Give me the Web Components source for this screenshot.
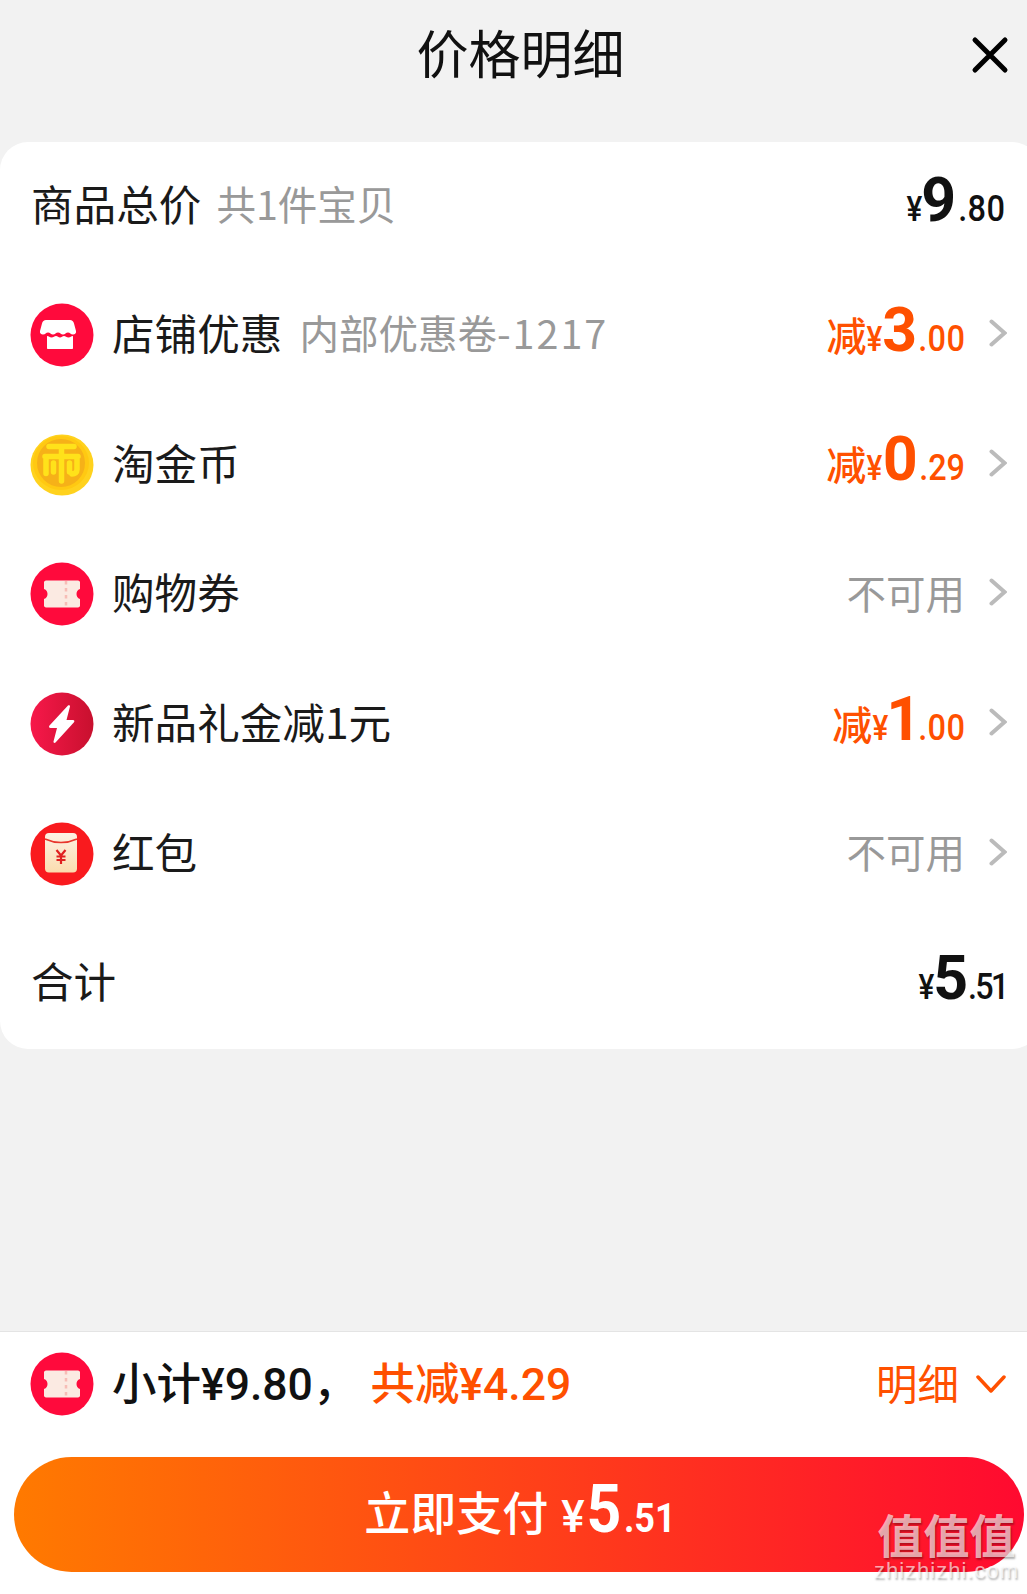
<!DOCTYPE html>
<html lang="zh">
<head>
<meta charset="utf-8">
<title>价格明细</title>
<style>
  html, body { margin: 0; padding: 0; }
  body {
    width: 1027px;
    height: 1594px;
    background: #f2f2f2;
    font-family: "Noto Sans CJK SC", "Noto Sans", sans-serif;
    color: #111;
    overflow: hidden;
  }
</style>
</head>
<body>
<price-sheet>
  <sheet-header slot="header" title-text="价格明细"></sheet-header>
  <price-row slot="rows" height="128.500" lift="14" note-gap="15" label="商品总价" note="共1件宝贝" kind="total" yen="¥" big="9" small=".80"></price-row>
  <price-row slot="rows" icon="shop" label="店铺优惠" note="内部优惠卷" note-tail="-1217" kind="off" yen="¥" big="3" small=".00" arrow></price-row>
  <price-row slot="rows" icon="coin" label="淘金币" kind="off" yen="¥" big="0" small=".29" arrow></price-row>
  <price-row slot="rows" icon="ticket" label="购物券" kind="none" arrow></price-row>
  <price-row slot="rows" icon="bolt" label="新品礼金减1元" kind="off" yen="¥" big="1" small=".00" arrow></price-row>
  <price-row slot="rows" icon="packet" label="红包" kind="none" arrow></price-row>
  <price-row slot="rows" height="130.500" pad-bottom="1" lift="12" small-tight label="合计" kind="total" yen="¥" big="5" small=".51"></price-row>
  <sheet-footer slot="footer"></sheet-footer>
</price-sheet>

<script>
const ICONS = {
  shop: `<svg viewBox="0 0 64 64"><circle cx="32" cy="32" r="31.500" fill="#ff0a3c"/>
    <g transform="translate(-2 0)" fill="#fff">
      <path d="M22 17h20c2 0 3.500 1.500 4 3.500l2 7.500c.5 2-1 3.500-3 3.500-2.500 0-3-2-5-2s-3 2-5 2-3-2-5-2-3 2-5 2-3-2-5-2-2.500 2-5 2c-2 0-3.500-1.500-3-3.500l2-7.500c.5-2 2-3.500 4-3.500z"/>
      <path d="M19 33c2 0 2.500 1.500 4.500 1.500s3-1.500 4.500-1.500 2.500 1.500 4 1.500 2.500-1.500 4-1.500 2.500 1.500 4.500 1.500 2.500-1.500 4.500-1.500v12c0 .6-.4 1-1 1h-24c-.6 0-1-.4-1-1z"/>
    </g></svg>`,
  coin: `<svg viewBox="0 0 64 64"><ellipse cx="32" cy="32" rx="31.500" ry="30.500" fill="#ffd21e"/>
    <ellipse cx="31" cy="30" rx="28" ry="27" fill="#ffc912"/>
    <circle cx="31" cy="30" r="24" fill="#f6b118"/>
    <path d="M19 13.500h25M15 23.500h33M16 23.500v17M47 23.500v13c0 3-2 4.500-5 4.500M31.500 14v34M23.500 30v9M39.500 30v9" fill="none" stroke="#ffe21a" stroke-width="5.500" stroke-linecap="round"/></svg>`,
  ticket: `<svg viewBox="0 0 64 64"><circle cx="32" cy="32" r="31.500" fill="#ff0a3c"/>
    <path d="M16 18.500h32c1 0 2 .9 2 2v6.500c-2.500.8-3.500 2.800-3.500 5s1 4.200 3.500 5v6.500c0 1.100-1 2-2 2h-32c-1 0-2-.9-2-2v-6.500c2.500-.8 3.500-2.800 3.500-5s-1-4.200-3.500-5v-6.500c0-1.100 1-2 2-2z" fill="#fbeae2"/>
    <path d="M36 19v26" stroke="#f7bdb6" stroke-width="2.500" stroke-dasharray="3.500 3.500"/></svg>`,
  bolt: `<svg viewBox="0 0 64 64"><defs><linearGradient id="b" x1="0" x2="1" y1="0" y2="0"><stop offset="0" stop-color="#f7184a"/><stop offset="1" stop-color="#c8102e"/></linearGradient></defs>
    <circle cx="32" cy="32" r="31.500" fill="url(#b)"/>
    <path d="M38 13.500c.8-.8 2.200-.2 2 1L36.500 28h6.500c1.300 0 1.800 1.300 1 2.200L25.500 50.500c-.9.900-2.300.2-2-1l3.500-13.500H20.500c-1.300 0-2-1.500-1-2.500z" fill="#fff"/></svg>`,
  packet: `<svg viewBox="0 0 64 64"><defs><linearGradient id="p" x1="0" x2="0" y1="0" y2="1"><stop offset="0" stop-color="#fdf1e4"/><stop offset="1" stop-color="#fbdcae"/></linearGradient></defs>
    <circle cx="32" cy="32" r="31.500" fill="#f91a1e"/>
    <rect x="15" y="11" width="32" height="39.500" rx="4" fill="url(#p)"/>
    <path d="M15 17c10 4.500 22 4.500 32 0" fill="none" stroke="#e8362c" stroke-width="1.500"/>
    <path d="M26.500 28l4.500 5.500 4.500-5.500M31 33.500v8.500M26.500 34.500h9M26.500 38h9" fill="none" stroke="#e02020" stroke-width="2.200"/></svg>`
};

class PriceSheet extends HTMLElement {
  connectedCallback() {
    this.attachShadow({ mode: 'open' });
    this.shadowRoot.innerHTML = `
      <style>
        :host { display: flex; flex-direction: column; width: 1027px; height: 1594px; }
        .card {
          display: flex;
          flex-direction: column;
          height: 907px;
          margin-right: -13px;
          background: #fff;
          border-radius: 28px;
        }
        .spacer { flex: 1; }
      </style>
      <slot name="header"></slot>
      <div class="card"><slot name="rows"></slot></div>
      <div class="spacer"></div>
      <slot name="footer"></slot>
    `;
  }
}

class SheetHeader extends HTMLElement {
  connectedCallback() {
    this.attachShadow({ mode: 'open' });
    this.shadowRoot.innerHTML = `
      <style>
        :host { display: block; position: relative; height: 142px; }
        .title {
          padding: 16px 0 0 14px;
          text-align: center;
          font-size: 52px;
          line-height: 72px;
          color: #111;
        }
        svg { position: absolute; left: 971px; top: 36px; width: 38px; height: 38px; }
      </style>
      <div class="title">${this.getAttribute('title-text')}</div>
      <svg viewBox="0 0 38 38"><path d="M4 4l30 30M34 4L4 34" stroke="#000" stroke-width="5" stroke-linecap="round"/></svg>
    `;
  }
}

class PriceRow extends HTMLElement {
  connectedCallback() {
    const a = name => this.getAttribute(name);
    const kind = a('kind');
    const hasArrow = this.hasAttribute('arrow');
    let value = '';
    if (kind === 'none') {
      value = `<span class="none">不可用</span>`;
    } else {
      value = `<span class="amount ${kind}">${kind === 'off' ? '<span class="jian">减</span>' : ''}<span class="yen">${a('yen')}</span><span class="big">${a('big')}</span><span class="small">${a('small')}</span></span>`;
    }
    this.attachShadow({ mode: 'open' });
    this.shadowRoot.innerHTML = `
      <style>
        :host {
          display: flex;
          align-items: center;
          height: ${a('height') || 129.6}px;
          box-sizing: border-box;
          padding: 0 ${hasArrow ? 33 : 35}px ${a('pad-bottom') || 0}px 31px;
          font-size: 42.600px;
          color: #1a1a1a;
        }
        .icon { width: 64px; height: 64px; margin: 0 18px 0 -1px; flex: none; }
        .icon svg { display: block; width: 64px; height: 64px; }
        .label { margin-bottom: 7px; }
        .note { margin: 0 0 7px ${a('note-gap') || 17}px; font-size: 39.500px; color: #999; }
        .tail { letter-spacing: 2px; }
        .grow { flex: 1; }
        .amount { display: flex; align-items: baseline; margin-bottom: ${a('lift') || 12}px; font-family: "Roboto", "Noto Sans CJK SC", sans-serif; font-variant-numeric: proportional-nums; }
        .amount.total { color: #111; }
        .amount.off { color: #ff5000; }
        .jian { font-family: "Noto Sans CJK SC", sans-serif; font-size: 40px; font-weight: 500; }
        .yen { font-size: 35px; font-weight: 500; transform: scaleX(.85); margin: 0 -1px; }
        .big { font-size: 62px; font-weight: 700; transform: scaleX(.98); margin: 0 -1px; }
        .small { font-size: 36px; font-weight: 500; transform: scaleX(.9); transform-origin: right; margin-left: -4px; ${this.hasAttribute('small-tight') ? 'letter-spacing: -2px;' : ''} }
        .none { margin-bottom: 6px; font-size: 39.500px; color: #999; }
        .arrow { width: 18px; height: 28px; margin: 0 0 4px 24px; }
      </style>
      ${a('icon') ? `<div class="icon">${ICONS[a('icon')]}</div>` : ''}
      <span class="label">${a('label')}</span>
      ${a('note') ? `<span class="note">${a('note')}${a('note-tail') ? `<span class="tail">${a('note-tail')}</span>` : ''}</span>` : ''}
      <span class="grow"></span>
      ${value}
      ${hasArrow ? `<svg class="arrow" viewBox="0 0 18 28"><path d="M2.500 2.500L15.500 14 2.500 25.500" fill="none" stroke="#bbb" stroke-width="4" stroke-linecap="round"/></svg>` : ''}
    `;
  }
}

class SheetFooter extends HTMLElement {
  connectedCallback() {
    this.attachShadow({ mode: 'open' });
    this.shadowRoot.innerHTML = `
      <style>
        :host {
          display: flex;
          flex-direction: column;
          height: 263px;
          box-sizing: border-box;
          background: #fff;
          border-top: 1px solid #e4e4e4;
        }
        .bar {
          display: flex;
          align-items: center;
          height: 103px;
          padding: 0 21px 0 30px;
          font-size: 44.500px;
          font-weight: 500;
          font-family: "Roboto", "Noto Sans CJK SC", sans-serif;
        }
        .icon { width: 64px; height: 64px; margin-right: 18px; }
        .icon svg { display: block; width: 64px; height: 64px; }
        .text { margin-bottom: 7px; }
        .off { margin-left: 13px; color: #ff5000; }
        .grow { flex: 1; }
        .detail { margin-bottom: 3px; font-size: 41.500px; font-weight: 400; color: #ff5000; font-family: "Noto Sans CJK SC", sans-serif; }
        .down { width: 30px; height: 20px; margin-left: 17px; }
        .pay {
          display: flex;
          align-items: baseline;
          justify-content: center;
          margin: 22px 3px 0 14px;
          padding-left: 5px;
          height: 115px;
          line-height: 105px;
          border-radius: 58px;
          background: linear-gradient(90deg, #ff7a00, #ff0a30);
          color: #fff;
          font-weight: 500;
          font-family: "Roboto", "Noto Sans CJK SC", sans-serif;
          font-size: 46px;
        }
        .pay .cta { transform: translateY(-2px); }
        .pay .yen { margin-left: 13px; font-size: 44px; }
        .pay .big { font-size: 66px; font-weight: 700; margin: 0 1px 0 0; transform: scaleX(.92); }
        .pay .small { font-size: 40px; font-weight: 700; margin-left: -2px; transform: scaleX(.9); }
        water-mark { position: absolute; left: 874px; top: 1507px; }
      </style>
      <div class="bar">
        <div class="icon">${ICONS.ticket}</div>
        <span class="text">小计¥9.80，</span>
        <span class="text off">共减¥4.29</span>
        <span class="grow"></span>
        <span class="detail">明细</span>
        <svg class="down" viewBox="0 0 30 20"><path d="M2 3l13 14L28 3" fill="none" stroke="#ff5000" stroke-width="3.500" stroke-linecap="round" stroke-linejoin="round"/></svg>
      </div>
      <div class="pay"><span class="cta">立即支付</span><span class="yen">¥</span><span class="big">5</span><span class="small">.51</span></div>
      <water-mark></water-mark>
    `;
  }
}

class WaterMark extends HTMLElement {
  connectedCallback() {
    this.attachShadow({ mode: 'open' });
    this.shadowRoot.innerHTML = `
      <style>
        :host { display: block; color: rgba(255,255,255,.65); text-shadow: 1px 2px 2px rgba(0,0,0,.3); text-align: center; }
        .cn { font-family: "Noto Sans CJK SC", sans-serif; font-size: 46px; line-height: 52px; font-weight: 700; }
        .en { font-family: "Liberation Sans", sans-serif; font-size: 22px; line-height: 24px; letter-spacing: 1px; }
      </style>
      <div class="cn">值值值</div>
      <div class="en">zhizhizhi.com</div>
    `;
  }
}

customElements.define('price-sheet', PriceSheet);
customElements.define('sheet-header', SheetHeader);
customElements.define('price-row', PriceRow);
customElements.define('sheet-footer', SheetFooter);
customElements.define('water-mark', WaterMark);
</script>
</body>
</html>
